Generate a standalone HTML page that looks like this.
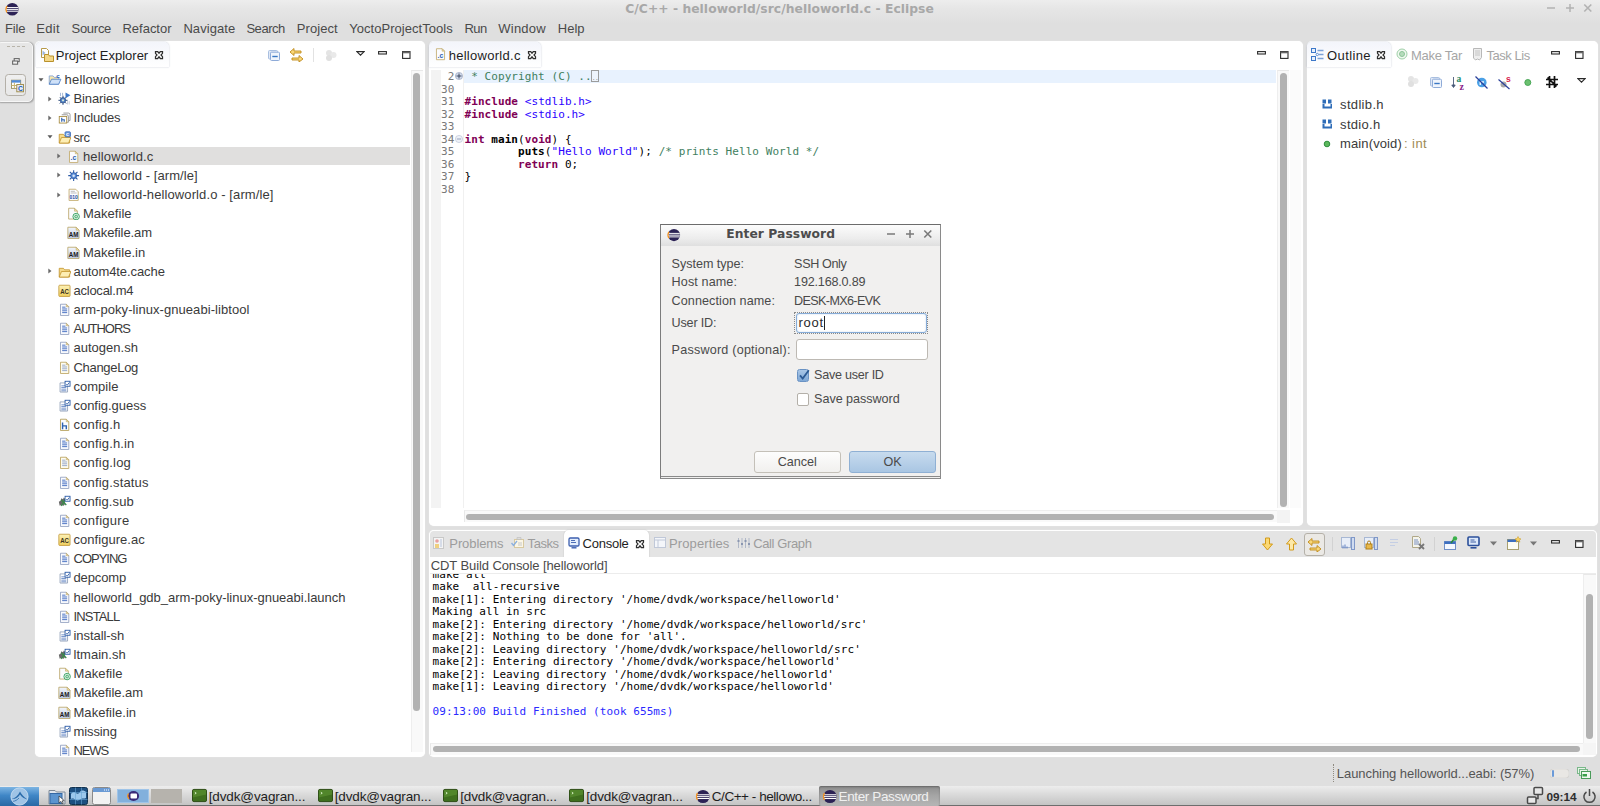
<!DOCTYPE html>
<html><head><meta charset="utf-8"><title>C/C++ - helloworld/src/helloworld.c - Eclipse</title>
<style>
*{box-sizing:border-box}
html,body{margin:0;padding:0}
body{width:1600px;height:806px;overflow:hidden;position:relative;background:#dfdfdf;font-family:"Liberation Sans","DejaVu Sans",sans-serif;font-size:13px;color:#3c3c3c}
.abs,.ic,.t,.m{position:absolute}
.t{white-space:nowrap;line-height:16px;height:16px;margin-top:1px;}
.m{white-space:pre;font-family:"DejaVu Sans Mono","Liberation Mono",monospace;font-size:11px;line-height:12.5px;color:#000;letter-spacing:.07px;margin-top:1px;margin-left:.5px}
.panel{position:absolute;background:#fff;border-radius:5px;box-shadow:0 0 1px rgba(255,255,255,.9)}
.tabsel{position:absolute;border-radius:5px 5px 0 0;background:linear-gradient(#f3f5fb,#fff);box-shadow:0 0 1.500px rgba(80,90,130,.45)}
.kw{color:#7f0055;font-weight:bold}
.str{color:#2a00ff}
.cm{color:#3f7f5f}
.ln{color:#787878}
.b{font-weight:bold}
</style></head><body>

<div class="abs" style="left:0;top:0;width:1600px;height:24px;background:linear-gradient(#ededed,#e6e6e6 35%,#dfdfdf)"></div>
<svg class="ic" style="left:5px;top:2.2px;" width="14.5" height="14.5" viewBox="0 0 16 16"><circle cx="8" cy="8" r="7" fill="#2c2255"/><path d="M2.2 4.5A7 7 0 0 0 2.2 11.5" stroke="#f7941e" stroke-width="1.6" fill="none"/><rect x="2.2" y="5.6" width="12.4" height="1.1" fill="#fff"/><rect x="1.6" y="7.6" width="13.2" height="1.1" fill="#fff"/><rect x="2.2" y="9.6" width="12.4" height="1.1" fill="#fff"/></svg>
<div class="t b" style="left:625.20px;top:-0.5px;font-size:12.3px;color:#a8a8a8;letter-spacing:0.051px;font-family:'DejaVu Sans','Liberation Sans',sans-serif;">C/C++ - helloworld/src/helloworld.c - Eclipse</div>
<svg class="ic" style="left:1547.2px;top:3.3000000000000007px" width="46" height="10" viewBox="0 0 46 10"><path d="M0 5h8M19 5h8M23 1v8" stroke="#b2b2b2" stroke-width="1.500" fill="none"/><path d="M37.300 1.500l7 7M44.300 1.500l-7 7" stroke="#b2b2b2" stroke-width="1.600" fill="none"/></svg>
<div class="t" style="left:4.90px;top:19.5px;font-size:13px;color:#4a4a4a;letter-spacing:-0.151px;">File</div>
<div class="t" style="left:36.20px;top:19.5px;font-size:13px;color:#4a4a4a;letter-spacing:0.373px;">Edit</div>
<div class="t" style="left:71.50px;top:19.5px;font-size:13px;color:#4a4a4a;letter-spacing:-0.267px;">Source</div>
<div class="t" style="left:122.50px;top:19.5px;font-size:13px;color:#4a4a4a;letter-spacing:-0.018px;">Refactor</div>
<div class="t" style="left:183.40px;top:19.5px;font-size:13px;color:#4a4a4a;letter-spacing:0.067px;">Navigate</div>
<div class="t" style="left:246.40px;top:19.5px;font-size:13px;color:#4a4a4a;letter-spacing:-0.451px;">Search</div>
<div class="t" style="left:296.80px;top:19.5px;font-size:13px;color:#4a4a4a;letter-spacing:0.069px;">Project</div>
<div class="t" style="left:349.30px;top:19.5px;font-size:13px;color:#4a4a4a;letter-spacing:0.032px;">YoctoProjectTools</div>
<div class="t" style="left:464.60px;top:19.5px;font-size:13px;color:#4a4a4a;letter-spacing:-0.653px;">Run</div>
<div class="t" style="left:498.30px;top:19.5px;font-size:13px;color:#4a4a4a;letter-spacing:0.225px;">Window</div>
<div class="t" style="left:557.80px;top:19.5px;font-size:13px;color:#4a4a4a;letter-spacing:-0.013px;">Help</div>
<div class="abs" style="left:-4px;top:41.500px;width:36.500px;height:60px;border:1px solid #f6f6f6;border-radius:5px;background:#e6e6e6;box-shadow:0.500px 0.500px 1.500px rgba(0,0,0,.28)"></div>
<div class="abs" style="left:7px;top:46.200px;width:18px;height:0;border-top:1.500px dashed #b8b4aa"></div>
<svg class="ic" style="left:12px;top:58px" width="8" height="7" viewBox="0 0 8 7"><rect x="2.200" y="0.600" width="5" height="3" fill="#f2f2f2" stroke="#6a6a6a" stroke-width="1.100"/><rect x="0.600" y="3" width="5" height="3.200" fill="#f2f2f2" stroke="#6a6a6a" stroke-width="1.100"/></svg>
<div class="abs" style="left:5.200px;top:74.200px;width:21px;height:21.700px;border:1px solid #b4b0a8;border-radius:3.500px;background:linear-gradient(#efefef,#e8e8e8)"></div>
<svg class="ic" style="left:10.500px;top:78.500px" width="13.500" height="14" viewBox="0 0 14 14"><rect x="0.500" y="1" width="9.500" height="8.500" fill="#fff" stroke="#9c946a"/><rect x="0.500" y="1" width="9.500" height="2.500" fill="#4f8bdc"/><path d="M3.500 3.500v6M0.500 6.500h9.500" stroke="#c4b06a"/><rect x="6" y="5.500" width="7" height="7.500" fill="#e4eefc" stroke="#a08c4a"/><text x="7.200" y="12" font-family="Liberation Sans,sans-serif" font-size="7" font-weight="bold" fill="#1c57b0">C</text></svg>
<div class="panel" style="left:35.200px;top:41px;width:389.600px;height:716px"></div>
<div class="tabsel" style="left:36px;top:42px;width:133px;height:25px"></div>
<svg class="ic" style="left:39px;top:46.5px;" width="16" height="16" viewBox="0 0 16 16"><path d="M2.500 1.500h5l2 2v7h-7z" fill="#fff" stroke="#b79a4a"/><path d="M3.500 3.500l3 2.500-3 2.500z" fill="#9bb5e0"/><path d="M5.500 7.500h4l1 1.500h4v5.500h-9z" fill="#f3d789" stroke="#b8912b"/></svg>
<div class="t" style="left:55.80px;top:46.5px;font-size:13px;color:#1e1e1e;letter-spacing:-0.005px;">Project Explorer</div>
<svg class="ic" style="left:153.5px;top:49.6px" width="10" height="10" viewBox="0 0 10 10"><path d="M1.500 1.500h2.200L5 3.200 6.300 1.500h2.200v1.800L7 5l1.500 1.700v1.800H6.300L5 6.800 3.700 8.500H1.500V6.700L3 5 1.500 3.300z" fill="#fff" stroke="#2e2e2e" stroke-width="1.250"/></svg>
<svg class="ic" style="left:268px;top:50px" width="12" height="11" viewBox="0 0 12 11"><rect x="0.500" y="0.500" width="9" height="8.500" rx="1" fill="#dfe8f6" stroke="#a9bfe0"/><rect x="2.500" y="2.200" width="9" height="8.300" rx="1" fill="#f0f5fc" stroke="#8eabd8"/><path d="M4.300 6.500h5.400" stroke="#3a78c4" stroke-width="1.400"/></svg>
<svg class="ic" style="left:289px;top:47px" width="15" height="15" viewBox="0 0 15 15"><path d="M12 4H5V1.500L1 5l4 3.500V6h7z" fill="#f8d77a" stroke="#c08a1a" stroke-width=".9"/><path d="M3 11h7V8.500L14 12l-4 3V13H3z" fill="#f8d77a" stroke="#c08a1a" stroke-width=".9"/></svg>
<div class="abs" style="left:313px;top:48px;width:1px;height:14px;background:#e2e2e2"></div>
<svg class="ic" style="left:324px;top:49px" width="14" height="13" viewBox="0 0 14 13"><circle cx="5" cy="4" r="3" fill="#e4e4e4"/><circle cx="9.500" cy="6" r="3" fill="#e9e9e9"/><circle cx="5" cy="9" r="3" fill="#e0e0e0"/></svg>
<svg class="ic" style="left:355.5px;top:50.5px" width="9" height="5" viewBox="0 0 9 5"><path d="M0.800 0.600h7.400L4.500 4.200z" fill="#fff" stroke="#2a2a2a" stroke-width="1.100"/></svg>
<svg class="ic" style="left:378px;top:51px" width="9" height="4" viewBox="0 0 9 4"><rect x="0.600" y="0.600" width="7.800" height="2.400" fill="#fff" stroke="#2a2a2a" stroke-width="1.100"/></svg>
<svg class="ic" style="left:401.8px;top:51px" width="9" height="8" viewBox="0 0 9 8"><rect x="0.600" y="0.600" width="7.400" height="6.800" fill="#fff" stroke="#2a2a2a" stroke-width="1.100"/><rect x="0.600" y="0.600" width="7.400" height="1.700" fill="#666"/></svg>
<div class="abs" style="left:410.500px;top:70px;width:12px;height:682px;background:#f9f9f9;border-left:1px solid #eeeeee;border-top:1px solid #e8e8e8"></div>
<div class="abs" style="left:413px;top:73px;width:7px;height:638px;border-radius:4px;background:#b2b2b2"></div>
<div class="abs" style="left:38px;top:147px;width:372px;height:18px;background:#e0dfde"></div>
<div class="abs" style="left:37px;top:68px;width:374px;height:688px;overflow:hidden">
<svg class="ic" style="left:0.5px;top:9.5px" width="6" height="4" viewBox="0 0 6 4"><path d="M0.500 0.300h5L3 3.500z" fill="#5a5a5a"/></svg>
<svg class="ic" style="left:11.4px;top:5.00px" width="13.3" height="13.3" viewBox="0 0 16 16"><path d="M1.500 3.500h4.500l1.500 1.800h5.500v8.200h-11.500z" fill="#f7e7ae" stroke="#7f9fd4"/><path d="M1.500 13.500l2.700-6h11.300l-2.700 6z" fill="#cfe1f8" stroke="#4f80c8"/><text x="9.800" y="6.300" font-family="Liberation Sans,sans-serif" font-size="7.500" font-weight="bold" fill="#2458b0">c</text></svg>
<div class="t" style="left:27.5px;top:3.00px;color:#3a3a3a;letter-spacing:0.215px">helloworld</div>
<svg class="ic" style="left:10.5px;top:27.67px" width="4" height="6" viewBox="0 0 4 6"><path d="M0.300 0.500v5L3.500 3z" fill="#6a6a6a"/></svg>
<svg class="ic" style="left:20.9px;top:24.17px" width="13.3" height="13.3" viewBox="0 0 16 16"><g stroke="#33507e" stroke-width="1.200"><path d="M6 4.500v11M0.500 10h11M2.200 6.200l7.600 7.600M9.800 6.200l-7.600 7.600"/></g><circle cx="6" cy="10" r="3.300" fill="#4f7fc4" stroke="#2b4a80" stroke-width=".8"/><circle cx="6" cy="10" r="1.300" fill="#d8ecd8"/><path d="M9 0.500l6 3.500-6 3.500z" fill="#3d78c9"/><path d="M3 1v4M5.500 1v3.500" stroke="#8aa4cc" stroke-width=".9"/><path d="M11.500 11v4M13.500 11v4" stroke="#b0b8c8" stroke-width=".8"/></svg>
<div class="t" style="left:36.5px;top:22.17px;color:#3a3a3a;letter-spacing:-0.134px">Binaries</div>
<svg class="ic" style="left:10.5px;top:46.84px" width="4" height="6" viewBox="0 0 4 6"><path d="M0.300 0.500v5L3.500 3z" fill="#6a6a6a"/></svg>
<svg class="ic" style="left:20.9px;top:43.34px" width="13.3" height="13.3" viewBox="0 0 16 16"><path d="M6.500 2.500h6q2 0 2 2v7h-2" fill="#fff" stroke="#888"/><path d="M4.500 4.500h6q2 0 2 2v7h-2" fill="#fff" stroke="#888"/><rect x="1.500" y="6.500" width="9" height="8" fill="#fff" stroke="#a4873a"/><path d="M4.500 8v5M4.500 10.500h3v2.500" stroke="#2e62b0" stroke-width="1.400" fill="none"/></svg>
<div class="t" style="left:36.5px;top:41.34px;color:#3a3a3a;letter-spacing:-0.203px">Includes</div>
<svg class="ic" style="left:9.5px;top:67.00999999999999px" width="6" height="4" viewBox="0 0 6 4"><path d="M0.500 0.300h5L3 3.500z" fill="#5a5a5a"/></svg>
<svg class="ic" style="left:20.9px;top:62.51px" width="13.3" height="13.3" viewBox="0 0 16 16"><path d="M1.500 4h5l1.500 1.800h6v8.700h-12.500z" fill="#f6dc8c" stroke="#c2952e"/><path d="M1.500 14.500l2.700-6.700h11.300l-2.700 6.700z" fill="#fdeeb4" stroke="#c2952e"/><rect x="8.500" y="1" width="6.500" height="6" rx="1" fill="#6f9fe4" stroke="#3a68b4"/><text x="9.700" y="6" font-family="Liberation Sans,sans-serif" font-size="6" font-weight="bold" fill="#fff">c</text></svg>
<div class="t" style="left:36.5px;top:60.51px;color:#3a3a3a;letter-spacing:-0.381px">src</div>
<svg class="ic" style="left:19.5px;top:85.18px" width="4" height="6" viewBox="0 0 4 6"><path d="M0.300 0.500v5L3.500 3z" fill="#6a6a6a"/></svg>
<svg class="ic" style="left:29.9px;top:81.68px" width="13.3" height="13.3" viewBox="0 0 16 16"><path d="M3 1.500h7l3 3v10.500h-10z" fill="#fbfcff" stroke="#c0a868"/><path d="M10 1.500v3h3z" fill="#f4e2a6" stroke="#b9a468" stroke-width=".7"/><text x="4.300" y="12.500" font-family="Liberation Sans,sans-serif" font-size="8.500" font-weight="bold" fill="#2e62b0">.c</text></svg>
<div class="t" style="left:45.9px;top:79.68px;color:#3a3a3a;letter-spacing:0.162px">helloworld.c</div>
<svg class="ic" style="left:19.5px;top:104.35000000000002px" width="4" height="6" viewBox="0 0 4 6"><path d="M0.300 0.500v5L3.500 3z" fill="#6a6a6a"/></svg>
<svg class="ic" style="left:29.9px;top:100.85px" width="13.3" height="13.3" viewBox="0 0 16 16"><g stroke="#2b5aa5" stroke-width="1.300"><path d="M8 1.500v13M1.500 8h13M3.400 3.400l9.200 9.200M12.600 3.400l-9.200 9.200"/></g><circle cx="8" cy="8" r="3.600" fill="#5b8dd6" stroke="#2b5aa5"/><circle cx="8" cy="8" r="1.500" fill="#dbe8fa"/></svg>
<div class="t" style="left:45.9px;top:98.85px;color:#3a3a3a;letter-spacing:0.065px">helloworld - [arm/le]</div>
<svg class="ic" style="left:19.5px;top:123.52000000000001px" width="4" height="6" viewBox="0 0 4 6"><path d="M0.300 0.500v5L3.500 3z" fill="#6a6a6a"/></svg>
<svg class="ic" style="left:29.9px;top:120.02px" width="13.3" height="13.3" viewBox="0 0 16 16"><path d="M2.500 1.500h8l3 3v10.500h-11z" fill="#fbfcff" stroke="#c0a868"/><path d="M4.500 4h5M4.500 6h7" stroke="#b0b0b0"/><text x="3" y="13.500" font-family="Liberation Sans,sans-serif" font-size="7" font-weight="bold" fill="#1c4aa0" textLength="10" lengthAdjust="spacingAndGlyphs">010</text></svg>
<div class="t" style="left:45.9px;top:118.02px;color:#3a3a3a;letter-spacing:0.102px">helloworld-helloworld.o - [arm/le]</div>
<svg class="ic" style="left:29.9px;top:139.19px" width="13.3" height="13.3" viewBox="0 0 16 16"><path d="M2 1.500h7l3.500 3.500v9.500h-10.500z" fill="#fbfbfd" stroke="#b9a468"/><path d="M9 1.500v3.500h3.500z" fill="#f4e2a6" stroke="#b9a468" stroke-width=".7"/><circle cx="11" cy="11.500" r="3.900" fill="#e6f6ea" stroke="#35a060" stroke-width="1.100"/><circle cx="11" cy="11.500" r="1.700" fill="#bfe6cc" stroke="#35a060" stroke-width="1"/></svg>
<div class="t" style="left:45.9px;top:137.19px;color:#3a3a3a;letter-spacing:0.035px">Makefile</div>
<svg class="ic" style="left:29.9px;top:158.36px" width="13.3" height="13.3" viewBox="0 0 16 16"><defs><linearGradient id="gam" x1="0" y1="0" x2="0" y2="1"><stop offset="0" stop-color="#f4f6fb"/><stop offset="1" stop-color="#bccae4"/></linearGradient></defs><path d="M1 1.500h10l3.500 3.500v10h-13.500z" fill="url(#gam)" stroke="#b9a468"/><path d="M11 1.500v3.500h3.500z" fill="#f4e2a6" stroke="#b9a468" stroke-width=".7"/><text x="2.200" y="13.600" font-family="Liberation Sans,sans-serif" font-size="9" font-weight="bold" fill="#1a1a1a" textLength="11.500" lengthAdjust="spacingAndGlyphs">AM</text></svg>
<div class="t" style="left:45.9px;top:156.36px;color:#3a3a3a;letter-spacing:-0.098px">Makefile.am</div>
<svg class="ic" style="left:29.9px;top:177.53px" width="13.3" height="13.3" viewBox="0 0 16 16"><defs><linearGradient id="gam" x1="0" y1="0" x2="0" y2="1"><stop offset="0" stop-color="#f4f6fb"/><stop offset="1" stop-color="#bccae4"/></linearGradient></defs><path d="M1 1.500h10l3.500 3.500v10h-13.500z" fill="url(#gam)" stroke="#b9a468"/><path d="M11 1.500v3.500h3.500z" fill="#f4e2a6" stroke="#b9a468" stroke-width=".7"/><text x="2.200" y="13.600" font-family="Liberation Sans,sans-serif" font-size="9" font-weight="bold" fill="#1a1a1a" textLength="11.500" lengthAdjust="spacingAndGlyphs">AM</text></svg>
<div class="t" style="left:45.9px;top:175.53px;color:#3a3a3a;letter-spacing:0.014px">Makefile.in</div>
<svg class="ic" style="left:10.5px;top:200.20000000000005px" width="4" height="6" viewBox="0 0 4 6"><path d="M0.300 0.500v5L3.500 3z" fill="#6a6a6a"/></svg>
<svg class="ic" style="left:20.9px;top:196.70px" width="13.3" height="13.3" viewBox="0 0 16 16"><path d="M1.500 4h5l1.500 1.800h6v8.700h-12.500z" fill="#f6dc8c" stroke="#c2952e"/><path d="M1.500 14.500l2.700-6.700h11.300l-2.700 6.700z" fill="#fdeeb4" stroke="#c2952e"/></svg>
<div class="t" style="left:36.5px;top:194.70px;color:#3a3a3a;letter-spacing:-0.087px">autom4te.cache</div>
<svg class="ic" style="left:20.9px;top:215.87px" width="13.3" height="13.3" viewBox="0 0 16 16"><defs><linearGradient id="gac" x1="0" y1="0" x2="0" y2="1"><stop offset="0" stop-color="#fdf2b8"/><stop offset="1" stop-color="#efcf5e"/></linearGradient></defs><rect x="1" y="1.500" width="13.500" height="13.500" rx="1" fill="url(#gac)" stroke="#c29a3c"/><text x="2.600" y="12.600" font-family="Liberation Sans,sans-serif" font-size="9.500" font-weight="bold" fill="#3a3320" textLength="10.500" lengthAdjust="spacingAndGlyphs">AC</text></svg>
<div class="t" style="left:36.5px;top:213.87px;color:#3a3a3a;letter-spacing:-0.244px">aclocal.m4</div>
<svg class="ic" style="left:20.9px;top:235.04px" width="13.3" height="13.3" viewBox="0 0 16 16"><path d="M3 1.500h7l3 3v10.500h-10z" fill="#fafbfe" stroke="#8d9cbc"/><path d="M10 1.500v3h3z" fill="#efd9a0" stroke="#b9a468" stroke-width=".7"/><path d="M5 5h4M5 7.200h6M5 9.400h6M5 11.600h6" stroke="#4c74c4" stroke-width="1.200"/></svg>
<div class="t" style="left:36.5px;top:233.04px;color:#3a3a3a;letter-spacing:0.059px">arm-poky-linux-gnueabi-libtool</div>
<svg class="ic" style="left:20.9px;top:254.21px" width="13.3" height="13.3" viewBox="0 0 16 16"><path d="M3 1.500h7l3 3v10.500h-10z" fill="#fafbfe" stroke="#8d9cbc"/><path d="M10 1.500v3h3z" fill="#efd9a0" stroke="#b9a468" stroke-width=".7"/><path d="M5 5h4M5 7.200h6M5 9.400h6M5 11.600h6" stroke="#4c74c4" stroke-width="1.200"/></svg>
<div class="t" style="left:36.5px;top:252.21px;color:#3a3a3a;letter-spacing:-1.009px">AUTHORS</div>
<svg class="ic" style="left:20.9px;top:273.38px" width="13.3" height="13.3" viewBox="0 0 16 16"><path d="M3 1.500h7l3 3v10.500h-10z" fill="#fafbfe" stroke="#8d9cbc"/><path d="M10 1.500v3h3z" fill="#efd9a0" stroke="#b9a468" stroke-width=".7"/><path d="M5 5h4M5 7.200h6M5 9.400h6M5 11.600h6" stroke="#4c74c4" stroke-width="1.200"/></svg>
<div class="t" style="left:36.5px;top:271.38px;color:#3a3a3a;letter-spacing:0.016px">autogen.sh</div>
<svg class="ic" style="left:20.9px;top:292.55px" width="13.3" height="13.3" viewBox="0 0 16 16"><path d="M3 1.500h7l3 3v10.500h-10z" fill="#fffdf0" stroke="#b9a05a"/><path d="M10 1.500v3h3z" fill="#efd9a0" stroke="#b9a468" stroke-width=".7"/><path d="M5 5h4M5 7.200h6M5 9.400h6M5 11.600h6" stroke="#8fa2c8" stroke-width="1.100"/></svg>
<div class="t" style="left:36.5px;top:290.55px;color:#3a3a3a;letter-spacing:-0.304px">ChangeLog</div>
<svg class="ic" style="left:20.9px;top:311.72px" width="13.3" height="13.3" viewBox="0 0 16 16"><path d="M2.5 3.5h7l2 2v9h-9z" fill="#fff" stroke="#8c9bb5"/><path d="M4 7h5M4 9h6M4 11h6M4 13h6" stroke="#5b7fc0" stroke-width="1"/><rect x="8.5" y="1.5" width="6" height="6" fill="#fff" stroke="#1c4fa0"/><path d="M10 5l1.2 1.2L13.6 3" stroke="#1c4fa0" fill="none"/></svg>
<div class="t" style="left:36.5px;top:309.72px;color:#3a3a3a;letter-spacing:0.015px">compile</div>
<svg class="ic" style="left:20.9px;top:330.89px" width="13.3" height="13.3" viewBox="0 0 16 16"><path d="M2.5 3.5h7l2 2v9h-9z" fill="#fff" stroke="#8c9bb5"/><path d="M4 7h5M4 9h6M4 11h6M4 13h6" stroke="#5b7fc0" stroke-width="1"/><rect x="8.5" y="1.5" width="6" height="6" fill="#fff" stroke="#1c4fa0"/><path d="M10 5l1.2 1.2L13.6 3" stroke="#1c4fa0" fill="none"/></svg>
<div class="t" style="left:36.5px;top:328.89px;color:#3a3a3a;letter-spacing:-0.033px">config.guess</div>
<svg class="ic" style="left:20.9px;top:350.06px" width="13.3" height="13.3" viewBox="0 0 16 16"><path d="M3 1.500h7l3 3v10.500h-10z" fill="#fbfcff" stroke="#b09a50"/><path d="M10 1.500v3h3z" fill="#f4e2a6" stroke="#b9a468" stroke-width=".7"/><path d="M5.500 5.500v8M5.500 9.500h4.500v4" stroke="#2e62b0" stroke-width="1.700" fill="none"/></svg>
<div class="t" style="left:36.5px;top:348.06px;color:#3a3a3a;letter-spacing:0.157px">config.h</div>
<svg class="ic" style="left:20.9px;top:369.23px" width="13.3" height="13.3" viewBox="0 0 16 16"><path d="M3 1.500h7l3 3v10.500h-10z" fill="#fafbfe" stroke="#8d9cbc"/><path d="M10 1.500v3h3z" fill="#efd9a0" stroke="#b9a468" stroke-width=".7"/><path d="M5 5h4M5 7.200h6M5 9.400h6M5 11.600h6" stroke="#4c74c4" stroke-width="1.200"/></svg>
<div class="t" style="left:36.5px;top:367.23px;color:#3a3a3a;letter-spacing:0.158px">config.h.in</div>
<svg class="ic" style="left:20.9px;top:388.40px" width="13.3" height="13.3" viewBox="0 0 16 16"><path d="M3 1.500h7l3 3v10.500h-10z" fill="#fffdf0" stroke="#b9a05a"/><path d="M10 1.500v3h3z" fill="#efd9a0" stroke="#b9a468" stroke-width=".7"/><path d="M5 5h4M5 7.200h6M5 9.400h6M5 11.600h6" stroke="#8fa2c8" stroke-width="1.100"/></svg>
<div class="t" style="left:36.5px;top:386.40px;color:#3a3a3a;letter-spacing:0.184px">config.log</div>
<svg class="ic" style="left:20.9px;top:407.57px" width="13.3" height="13.3" viewBox="0 0 16 16"><path d="M3 1.500h7l3 3v10.500h-10z" fill="#fafbfe" stroke="#8d9cbc"/><path d="M10 1.500v3h3z" fill="#efd9a0" stroke="#b9a468" stroke-width=".7"/><path d="M5 5h4M5 7.200h6M5 9.400h6M5 11.600h6" stroke="#4c74c4" stroke-width="1.200"/></svg>
<div class="t" style="left:36.5px;top:405.57px;color:#3a3a3a;letter-spacing:0.169px">config.status</div>
<svg class="ic" style="left:20.9px;top:426.74px" width="13.3" height="13.3" viewBox="0 0 16 16"><path d="M1 8l2-1 1-3 2 1 1-2 2 2-1 3 1 2-2 3-3-1-2 1z" fill="#6a6a6a"/><path d="M4 6l6 6M9 5l-5 8" stroke="#3a8a4a" stroke-width="1.5"/><rect x="8.5" y="1.5" width="6" height="6" fill="#fff" stroke="#1c4fa0"/><path d="M10 5l1.2 1.2L13.6 3" stroke="#1c4fa0" fill="none"/></svg>
<div class="t" style="left:36.5px;top:424.74px;color:#3a3a3a;letter-spacing:0.113px">config.sub</div>
<svg class="ic" style="left:20.9px;top:445.91px" width="13.3" height="13.3" viewBox="0 0 16 16"><path d="M3 1.500h7l3 3v10.500h-10z" fill="#fafbfe" stroke="#8d9cbc"/><path d="M10 1.500v3h3z" fill="#efd9a0" stroke="#b9a468" stroke-width=".7"/><path d="M5 5h4M5 7.200h6M5 9.400h6M5 11.600h6" stroke="#4c74c4" stroke-width="1.200"/></svg>
<div class="t" style="left:36.5px;top:443.91px;color:#3a3a3a;letter-spacing:0.268px">configure</div>
<svg class="ic" style="left:20.9px;top:465.08px" width="13.3" height="13.3" viewBox="0 0 16 16"><defs><linearGradient id="gac" x1="0" y1="0" x2="0" y2="1"><stop offset="0" stop-color="#fdf2b8"/><stop offset="1" stop-color="#efcf5e"/></linearGradient></defs><rect x="1" y="1.500" width="13.500" height="13.500" rx="1" fill="url(#gac)" stroke="#c29a3c"/><text x="2.600" y="12.600" font-family="Liberation Sans,sans-serif" font-size="9.500" font-weight="bold" fill="#3a3320" textLength="10.500" lengthAdjust="spacingAndGlyphs">AC</text></svg>
<div class="t" style="left:36.5px;top:463.08px;color:#3a3a3a;letter-spacing:0.039px">configure.ac</div>
<svg class="ic" style="left:20.9px;top:484.25px" width="13.3" height="13.3" viewBox="0 0 16 16"><path d="M3 1.500h7l3 3v10.500h-10z" fill="#fafbfe" stroke="#8d9cbc"/><path d="M10 1.500v3h3z" fill="#efd9a0" stroke="#b9a468" stroke-width=".7"/><path d="M5 5h4M5 7.200h6M5 9.400h6M5 11.600h6" stroke="#4c74c4" stroke-width="1.200"/></svg>
<div class="t" style="left:36.5px;top:482.25px;color:#3a3a3a;letter-spacing:-0.996px">COPYING</div>
<svg class="ic" style="left:20.9px;top:503.42px" width="13.3" height="13.3" viewBox="0 0 16 16"><path d="M2.5 3.5h7l2 2v9h-9z" fill="#fff" stroke="#8c9bb5"/><path d="M4 7h5M4 9h6M4 11h6M4 13h6" stroke="#5b7fc0" stroke-width="1"/><rect x="8.5" y="1.5" width="6" height="6" fill="#fff" stroke="#1c4fa0"/><path d="M10 5l1.2 1.2L13.6 3" stroke="#1c4fa0" fill="none"/></svg>
<div class="t" style="left:36.5px;top:501.42px;color:#3a3a3a;letter-spacing:-0.126px">depcomp</div>
<svg class="ic" style="left:20.9px;top:522.59px" width="13.3" height="13.3" viewBox="0 0 16 16"><path d="M3 1.500h7l3 3v10.500h-10z" fill="#fafbfe" stroke="#8d9cbc"/><path d="M10 1.500v3h3z" fill="#efd9a0" stroke="#b9a468" stroke-width=".7"/><path d="M5 5h4M5 7.200h6M5 9.400h6M5 11.600h6" stroke="#4c74c4" stroke-width="1.200"/></svg>
<div class="t" style="left:36.5px;top:520.59px;color:#3a3a3a;letter-spacing:-0.010px">helloworld_gdb_arm-poky-linux-gnueabi.launch</div>
<svg class="ic" style="left:20.9px;top:541.76px" width="13.3" height="13.3" viewBox="0 0 16 16"><path d="M3 1.500h7l3 3v10.500h-10z" fill="#fafbfe" stroke="#8d9cbc"/><path d="M10 1.500v3h3z" fill="#efd9a0" stroke="#b9a468" stroke-width=".7"/><path d="M5 5h4M5 7.200h6M5 9.400h6M5 11.600h6" stroke="#4c74c4" stroke-width="1.200"/></svg>
<div class="t" style="left:36.5px;top:539.76px;color:#3a3a3a;letter-spacing:-0.840px">INSTALL</div>
<svg class="ic" style="left:20.9px;top:560.93px" width="13.3" height="13.3" viewBox="0 0 16 16"><path d="M2.5 3.5h7l2 2v9h-9z" fill="#fff" stroke="#8c9bb5"/><path d="M4 7h5M4 9h6M4 11h6M4 13h6" stroke="#5b7fc0" stroke-width="1"/><rect x="8.5" y="1.5" width="6" height="6" fill="#fff" stroke="#1c4fa0"/><path d="M10 5l1.2 1.2L13.6 3" stroke="#1c4fa0" fill="none"/></svg>
<div class="t" style="left:36.5px;top:558.93px;color:#3a3a3a;letter-spacing:-0.060px">install-sh</div>
<svg class="ic" style="left:20.9px;top:580.10px" width="13.3" height="13.3" viewBox="0 0 16 16"><path d="M1 8l2-1 1-3 2 1 1-2 2 2-1 3 1 2-2 3-3-1-2 1z" fill="#6a6a6a"/><path d="M4 6l6 6M9 5l-5 8" stroke="#3a8a4a" stroke-width="1.5"/><rect x="8.5" y="1.5" width="6" height="6" fill="#fff" stroke="#1c4fa0"/><path d="M10 5l1.2 1.2L13.6 3" stroke="#1c4fa0" fill="none"/></svg>
<div class="t" style="left:36.5px;top:578.10px;color:#3a3a3a;letter-spacing:0.030px">ltmain.sh</div>
<svg class="ic" style="left:20.9px;top:599.27px" width="13.3" height="13.3" viewBox="0 0 16 16"><path d="M2 1.500h7l3.500 3.500v9.500h-10.500z" fill="#fbfbfd" stroke="#b9a468"/><path d="M9 1.500v3.500h3.500z" fill="#f4e2a6" stroke="#b9a468" stroke-width=".7"/><circle cx="11" cy="11.500" r="3.900" fill="#e6f6ea" stroke="#35a060" stroke-width="1.100"/><circle cx="11" cy="11.500" r="1.700" fill="#bfe6cc" stroke="#35a060" stroke-width="1"/></svg>
<div class="t" style="left:36.5px;top:597.27px;color:#3a3a3a;letter-spacing:0.085px">Makefile</div>
<svg class="ic" style="left:20.9px;top:618.44px" width="13.3" height="13.3" viewBox="0 0 16 16"><defs><linearGradient id="gam" x1="0" y1="0" x2="0" y2="1"><stop offset="0" stop-color="#f4f6fb"/><stop offset="1" stop-color="#bccae4"/></linearGradient></defs><path d="M1 1.500h10l3.500 3.500v10h-13.500z" fill="url(#gam)" stroke="#b9a468"/><path d="M11 1.500v3.500h3.500z" fill="#f4e2a6" stroke="#b9a468" stroke-width=".7"/><text x="2.200" y="13.600" font-family="Liberation Sans,sans-serif" font-size="9" font-weight="bold" fill="#1a1a1a" textLength="11.500" lengthAdjust="spacingAndGlyphs">AM</text></svg>
<div class="t" style="left:36.5px;top:616.44px;color:#3a3a3a;letter-spacing:-0.062px">Makefile.am</div>
<svg class="ic" style="left:20.9px;top:637.61px" width="13.3" height="13.3" viewBox="0 0 16 16"><defs><linearGradient id="gam" x1="0" y1="0" x2="0" y2="1"><stop offset="0" stop-color="#f4f6fb"/><stop offset="1" stop-color="#bccae4"/></linearGradient></defs><path d="M1 1.500h10l3.500 3.500v10h-13.500z" fill="url(#gam)" stroke="#b9a468"/><path d="M11 1.500v3.500h3.500z" fill="#f4e2a6" stroke="#b9a468" stroke-width=".7"/><text x="2.200" y="13.600" font-family="Liberation Sans,sans-serif" font-size="9" font-weight="bold" fill="#1a1a1a" textLength="11.500" lengthAdjust="spacingAndGlyphs">AM</text></svg>
<div class="t" style="left:36.5px;top:635.61px;color:#3a3a3a;letter-spacing:0.042px">Makefile.in</div>
<svg class="ic" style="left:20.9px;top:656.78px" width="13.3" height="13.3" viewBox="0 0 16 16"><path d="M2.5 3.5h7l2 2v9h-9z" fill="#fff" stroke="#8c9bb5"/><path d="M4 7h5M4 9h6M4 11h6M4 13h6" stroke="#5b7fc0" stroke-width="1"/><rect x="8.5" y="1.5" width="6" height="6" fill="#fff" stroke="#1c4fa0"/><path d="M10 5l1.2 1.2L13.6 3" stroke="#1c4fa0" fill="none"/></svg>
<div class="t" style="left:36.5px;top:654.78px;color:#3a3a3a;letter-spacing:-0.111px">missing</div>
<svg class="ic" style="left:20.9px;top:675.95px" width="13.3" height="13.3" viewBox="0 0 16 16"><path d="M3 1.500h7l3 3v10.500h-10z" fill="#fafbfe" stroke="#8d9cbc"/><path d="M10 1.500v3h3z" fill="#efd9a0" stroke="#b9a468" stroke-width=".7"/><path d="M5 5h4M5 7.200h6M5 9.400h6M5 11.600h6" stroke="#4c74c4" stroke-width="1.200"/></svg>
<div class="t" style="left:36.5px;top:673.95px;color:#3a3a3a;letter-spacing:-1.125px">NEWS</div>
</div>
<div class="panel" style="left:428.500px;top:41px;width:874.500px;height:485px"></div>
<div class="tabsel" style="left:429px;top:42px;width:111.500px;height:25px"></div>
<svg class="ic" style="left:434px;top:47px;" width="13" height="14" viewBox="0 0 16 16"><path d="M3 1.500h7l3 3v10.500h-10z" fill="#fbfcff" stroke="#c0a868"/><path d="M10 1.500v3h3z" fill="#f4e2a6" stroke="#b9a468" stroke-width=".7"/><text x="4.300" y="12.500" font-family="Liberation Sans,sans-serif" font-size="8.500" font-weight="bold" fill="#2e62b0">.c</text></svg>
<div class="t" style="left:448.70px;top:46.5px;font-size:13px;color:#1e1e1e;letter-spacing:0.279px;">helloworld.c</div>
<svg class="ic" style="left:526.5px;top:49.6px" width="10" height="10" viewBox="0 0 10 10"><path d="M1.500 1.500h2.200L5 3.200 6.300 1.500h2.200v1.800L7 5l1.500 1.700v1.800H6.300L5 6.800 3.700 8.500H1.500V6.700L3 5 1.500 3.300z" fill="#fff" stroke="#2e2e2e" stroke-width="1.250"/></svg>
<svg class="ic" style="left:1257px;top:51px" width="9" height="4" viewBox="0 0 9 4"><rect x="0.600" y="0.600" width="7.800" height="2.400" fill="#fff" stroke="#2a2a2a" stroke-width="1.100"/></svg>
<svg class="ic" style="left:1279.8px;top:51px" width="9" height="8" viewBox="0 0 9 8"><rect x="0.600" y="0.600" width="7.400" height="6.800" fill="#fff" stroke="#2a2a2a" stroke-width="1.100"/><rect x="0.600" y="0.600" width="7.400" height="1.700" fill="#666"/></svg>
<div class="abs" style="left:431px;top:70px;width:10px;height:438px;background:#f3f3f3"></div>
<div class="abs" style="left:463px;top:70px;width:1px;height:438px;background:#f0f0f0"></div>
<div class="abs" style="left:464px;top:70px;width:812px;height:12.500px;background:#e8f2fe"></div>
<div class="abs" style="left:1277px;top:70px;width:12px;height:438px;background:#f9f9f9;border-left:1px solid #eeeeee;border-top:1px solid #e8e8e8"></div>
<div class="abs" style="left:1280.200px;top:73px;width:6.700px;height:434px;border-radius:4px;background:#b2b2b2"></div>
<div class="abs" style="left:1290px;top:70px;width:11px;height:438px;background:#fbfbfb"></div>
<div class="abs" style="left:1276.500px;top:509.700px;width:13.300px;height:13px;background:#f3f3f3"></div>
<div class="abs" style="left:464px;top:510px;width:813px;height:12px;background:#f9f9f9;border-top:1px solid #eeeeee;border-left:1px solid #e8e8e8"></div>
<div class="abs" style="left:466px;top:513.700px;width:807.500px;height:6.600px;border-radius:4px;background:#b2b2b2"></div>
<div class="m ln" style="left:430px;width:24px;text-align:right;top:70.0px">2</div>
<div class="m" style="left:464px;top:70.0px"><span class="cm"> * Copyright (C) ..</span></div>
<div class="m ln" style="left:430px;width:24px;text-align:right;top:82.5px">30</div>
<div class="m ln" style="left:430px;width:24px;text-align:right;top:95.0px">31</div>
<div class="m" style="left:464px;top:95.0px"><span class="kw">#include</span> <span class="str">&lt;stdlib.h&gt;</span></div>
<div class="m ln" style="left:430px;width:24px;text-align:right;top:107.5px">32</div>
<div class="m" style="left:464px;top:107.5px"><span class="kw">#include</span> <span class="str">&lt;stdio.h&gt;</span></div>
<div class="m ln" style="left:430px;width:24px;text-align:right;top:120.0px">33</div>
<div class="m ln" style="left:430px;width:24px;text-align:right;top:132.5px">34</div>
<div class="m" style="left:464px;top:132.5px"><span class="kw">int</span> <span class="b">main</span>(<span class="kw">void</span>) {</div>
<div class="m ln" style="left:430px;width:24px;text-align:right;top:145.0px">35</div>
<div class="m" style="left:464px;top:145.0px">        <span class="b">puts</span>(<span class="str">"Hello World"</span>); <span class="cm">/* prints Hello World */</span></div>
<div class="m ln" style="left:430px;width:24px;text-align:right;top:157.5px">36</div>
<div class="m" style="left:464px;top:157.5px">        <span class="kw">return</span> 0;</div>
<div class="m ln" style="left:430px;width:24px;text-align:right;top:170.0px">37</div>
<div class="m" style="left:464px;top:170.0px">}</div>
<div class="m ln" style="left:430px;width:24px;text-align:right;top:182.5px">38</div>
<svg class="ic" style="left:454.500px;top:72px" width="8" height="8" viewBox="0 0 8 8"><circle cx="4" cy="4" r="3.600" fill="#d3dcec" stroke="#8e9cb8" stroke-width=".6"/><path d="M1.500 4h5M4 1.500v5" stroke="#2c3a56" stroke-width=".9"/></svg>
<svg class="ic" style="left:454.500px;top:135px" width="8" height="8" viewBox="0 0 8 8"><circle cx="4" cy="4" r="3.600" fill="#eef1f7" stroke="#b4bed2" stroke-width=".6"/><path d="M1.900 4h4.200" stroke="#8a98b4" stroke-width=".9"/></svg>
<div class="abs" style="left:591.200px;top:70.300px;width:7.600px;height:12.200px;border:1px solid #9c9c9c;background:#eef4fc"></div>
<div class="m" style="left:591.900px;top:74.200px;color:#6a6a6a;font-size:5.500px;letter-spacing:0;line-height:8px;margin:0">..</div>
<div class="panel" style="left:1306.500px;top:41px;width:291.500px;height:485px"></div>
<div class="tabsel" style="left:1307px;top:42px;width:84px;height:25px"></div>
<svg class="ic" style="left:1311px;top:48px" width="13" height="13" viewBox="0 0 13 13"><rect x="0.500" y="0.500" width="4" height="4" fill="#e8f0fb" stroke="#3d78c9"/><rect x="0.500" y="8.500" width="4" height="4" fill="#e8f0fb" stroke="#3d78c9"/><path d="M6.500 2.500h6M8 6.500h4.500M6.500 10.500h6" stroke="#7da2d8" stroke-width="1.400"/><circle cx="6.300" cy="6.500" r="1.200" fill="none" stroke="#3d78c9" stroke-width=".8"/></svg>
<div class="t" style="left:1327.10px;top:46.5px;font-size:13px;color:#1e1e1e;letter-spacing:0.371px;">Outline</div>
<svg class="ic" style="left:1375.5px;top:49.6px" width="10" height="10" viewBox="0 0 10 10"><path d="M1.500 1.500h2.200L5 3.200 6.300 1.500h2.200v1.800L7 5l1.500 1.700v1.800H6.300L5 6.800 3.700 8.500H1.500V6.700L3 5 1.500 3.300z" fill="#fff" stroke="#2e2e2e" stroke-width="1.250"/></svg>
<svg class="ic" style="left:1396px;top:48px" width="12" height="12" viewBox="0 0 12 12"><circle cx="6" cy="6" r="5" fill="#f0f8f0" stroke="#9fd0a8"/><circle cx="6" cy="6" r="2.500" fill="#b5dcbc" stroke="#8cc498"/></svg>
<div class="t" style="left:1411.00px;top:46.5px;font-size:13px;color:#a6a6a6;letter-spacing:-0.279px;">Make Tar</div>
<svg class="ic" style="left:1472px;top:47px" width="11" height="14" viewBox="0 0 11 14"><path d="M1.500 1.500h8v9l-2 2.500-2-1-2 1-2-2z" fill="#eee" stroke="#b8b8b8"/><path d="M3 4h5M3 6h5M3 8h5" stroke="#c4c4c4"/></svg>
<div class="t" style="left:1486.40px;top:46.5px;font-size:13px;color:#a6a6a6;letter-spacing:-0.446px;">Task Lis</div>
<svg class="ic" style="left:1551px;top:51px" width="9" height="4" viewBox="0 0 9 4"><rect x="0.600" y="0.600" width="7.800" height="2.400" fill="#fff" stroke="#2a2a2a" stroke-width="1.100"/></svg>
<svg class="ic" style="left:1574.8px;top:51px" width="9" height="8" viewBox="0 0 9 8"><rect x="0.600" y="0.600" width="7.400" height="6.800" fill="#fff" stroke="#2a2a2a" stroke-width="1.100"/><rect x="0.600" y="0.600" width="7.400" height="1.700" fill="#666"/></svg>
<svg class="ic" style="left:1406px;top:75px" width="14" height="13" viewBox="0 0 14 13"><circle cx="5" cy="4" r="3" fill="#e4e4e4"/><circle cx="9.500" cy="6" r="3" fill="#e9e9e9"/><circle cx="5" cy="9" r="3" fill="#e0e0e0"/></svg>
<svg class="ic" style="left:1430px;top:77px" width="12" height="11" viewBox="0 0 12 11"><rect x="0.500" y="0.500" width="9" height="8.500" rx="1" fill="#dfe8f6" stroke="#a9bfe0"/><rect x="2.500" y="2.200" width="9" height="8.300" rx="1" fill="#f0f5fc" stroke="#8eabd8"/><path d="M4.300 6.500h5.400" stroke="#3a78c4" stroke-width="1.400"/></svg>
<svg class="ic" style="left:1451px;top:75px" width="16" height="16" viewBox="0 0 16 16"><path d="M2.500 2v10M0.800 10l1.700 2.500 1.700-2.500z" stroke="#4a5a78" stroke-width=".9" fill="#4a5a78"/><text x="5.500" y="7" font-family="Liberation Serif,serif" font-size="9.500" font-weight="bold" fill="#1f8a6a">a</text><text x="8.500" y="14.500" font-family="Liberation Serif,serif" font-size="10" font-weight="bold" fill="#8a1f8a">z</text></svg>
<svg class="ic" style="left:1474px;top:75px" width="15" height="15" viewBox="0 0 15 15"><circle cx="7.800" cy="7.500" r="4.800" fill="#4aa0e6"/><path d="M5.500 6.200h4.500v1.600h-3v2.200h-1.500z" fill="#eaf4fd"/><path d="M1.500 1.500l12 12" stroke="#2a3f9a" stroke-width="1.200"/></svg>
<svg class="ic" style="left:1497px;top:75px" width="15" height="15" viewBox="0 0 15 15"><circle cx="6.500" cy="9.500" r="3" fill="#a8a8a8"/><path d="M1.500 4.500l11 9.500" stroke="#2a3f9a" stroke-width="1.200"/><text x="9" y="7" font-family="Liberation Sans,sans-serif" font-size="8.500" font-weight="bold" fill="#d8204a">s</text></svg>
<svg class="ic" style="left:1523px;top:78px" width="9" height="9" viewBox="0 0 9 9"><circle cx="4.800" cy="4.500" r="3" fill="#6cc070" stroke="#3fa24f" stroke-width=".9"/></svg>
<svg class="ic" style="left:1545px;top:75px" width="14" height="14" viewBox="0 0 14 14"><path d="M4.500 1v12M9.500 1v12M1 4.500h12M1 9.500h12M2.500 2.500l9 9" stroke="#111" stroke-width="1.700"/></svg>
<svg class="ic" style="left:1576.8px;top:77.9px" width="9" height="5" viewBox="0 0 9 5"><path d="M0.800 0.600h7.400L4.500 4.200z" fill="#fff" stroke="#2a2a2a" stroke-width="1.100"/></svg>
<svg class="ic" style="left:1322px;top:99px" width="10" height="10" viewBox="0 0 10 10"><rect x="0.500" y="0.500" width="3.500" height="4" fill="#2f6db8"/><rect x="6" y="0.500" width="3.500" height="4" fill="#2f6db8"/><path d="M1.500 5v3.500h8V5" fill="none" stroke="#2f6db8" stroke-width="2"/></svg>
<div class="t" style="left:1340.10px;top:96px;font-size:13px;color:#3a3a3a;letter-spacing:0.325px;">stdlib.h</div>
<svg class="ic" style="left:1322px;top:118.5px" width="10" height="10" viewBox="0 0 10 10"><rect x="0.500" y="0.500" width="3.500" height="4" fill="#2f6db8"/><rect x="6" y="0.500" width="3.500" height="4" fill="#2f6db8"/><path d="M1.500 5v3.500h8V5" fill="none" stroke="#2f6db8" stroke-width="2"/></svg>
<div class="t" style="left:1340.10px;top:115.5px;font-size:13px;color:#3a3a3a;letter-spacing:0.312px;">stdio.h</div>
<svg class="ic" style="left:1323px;top:139.500px" width="8" height="8" viewBox="0 0 8 8"><circle cx="4" cy="4" r="2.800" fill="#5cb85c" stroke="#2f8f3f"/></svg>
<div class="t" style="left:1340.10px;top:135px;font-size:13px;color:#3a3a3a;letter-spacing:0.111px;">main(void)</div>
<div class="t" style="left:1404.00px;top:135px;font-size:13px;color:#a08a54;letter-spacing:0.426px;">: int</div>
<div class="panel" style="left:428.500px;top:529.500px;width:1168px;height:227.500px;background:#fff;overflow:hidden"><div style="margin:1px 1px 0 1px;height:26.500px;background:#e4e4e4;border-radius:4px 4px 0 0"></div></div>
<div class="abs" style="left:564px;top:530px;width:85px;height:27.500px;background:#fff;border-radius:5px 5px 0 0;box-shadow:0 0 1.500px rgba(0,0,0,.2)"></div>
<div class="abs" style="left:562px;top:557px;width:90px;height:3px;background:#fff"></div>
<svg class="ic" style="left:433px;top:537px" width="12" height="13" viewBox="0 0 12 13"><rect x="0.500" y="0.500" width="10" height="11" fill="#f4f4f4" stroke="#c8c8c8"/><circle cx="4" cy="4" r="1.800" fill="#e8a0a0"/><rect x="2" y="7" width="4" height="4" fill="#f0d080"/><path d="M8 2v8" stroke="#b8c4dc"/></svg>
<div class="t" style="left:449.30px;top:535.3px;font-size:13px;color:#9c9c9c;letter-spacing:-0.090px;">Problems</div>
<svg class="ic" style="left:511px;top:537px" width="13" height="12" viewBox="0 0 13 12"><rect x="3.500" y="2.500" width="9" height="8" fill="#fbf6e6" stroke="#d8c9a0"/><path d="M6 0.500h4v2H6z" fill="#ddd" stroke="#bbb" stroke-width=".6"/><path d="M0.500 6l2 2.500L6 4" stroke="#8ab0e0" stroke-width="1.300" fill="none"/><path d="M7 6h4M7 8h4" stroke="#c8c8c8"/></svg>
<div class="t" style="left:527.60px;top:535.3px;font-size:13px;color:#9c9c9c;letter-spacing:-0.427px;">Tasks</div>
<svg class="ic" style="left:568px;top:537px" width="12" height="12" viewBox="0 0 12 12"><rect x="1" y="1" width="10" height="8" rx="1.200" fill="#e4eefc" stroke="#3c5fae" stroke-width="1.300"/><path d="M3 3.500h4M3 5.500h5" stroke="#3c5fae" stroke-width=".9"/><path d="M3.500 10.800h5" stroke="#3c5fae" stroke-width="1.400"/></svg>
<div class="t" style="left:582.60px;top:535.3px;font-size:13px;color:#1e1e1e;letter-spacing:-0.243px;">Console</div>
<svg class="ic" style="left:634.5px;top:538.6px" width="10" height="10" viewBox="0 0 10 10"><path d="M1.500 1.500h2.200L5 3.200 6.300 1.500h2.200v1.800L7 5l1.500 1.700v1.800H6.300L5 6.800 3.700 8.500H1.500V6.700L3 5 1.500 3.300z" fill="#fff" stroke="#2e2e2e" stroke-width="1.250"/></svg>
<svg class="ic" style="left:654px;top:537px" width="12" height="12" viewBox="0 0 12 12"><rect x="0.500" y="0.500" width="11" height="10" fill="#f4f6fa" stroke="#c0c8d8"/><path d="M0.500 3h11M4 3v7.500" stroke="#c0c8d8"/></svg>
<div class="t" style="left:669.00px;top:535.3px;font-size:13px;color:#9c9c9c;letter-spacing:0.115px;">Properties</div>
<svg class="ic" style="left:737px;top:538px" width="14" height="10" viewBox="0 0 14 10"><path d="M1.500 0v10M5 0v10M8.500 0v10M12 0v10" stroke="#b0b8c8" stroke-width="1"/><rect x="0.500" y="2" width="2" height="2" fill="#8a96b0"/><rect x="4" y="5" width="2" height="2" fill="#8a96b0"/><rect x="7.500" y="2" width="2" height="2" fill="#8a96b0"/><rect x="11" y="5" width="2" height="2" fill="#8a96b0"/></svg>
<div class="t" style="left:753.20px;top:535.3px;font-size:13px;color:#9c9c9c;letter-spacing:-0.374px;">Call Graph</div>
<svg class="ic" style="left:1261px;top:536.700px" width="13" height="14" viewBox="0 0 13 14"><path d="M4.500 1h4v6h3L6.500 13 1.500 7h3z" fill="#fbd873" stroke="#d29a1a"/></svg>
<svg class="ic" style="left:1284.500px;top:536.700px" width="13" height="14" viewBox="0 0 13 14"><path d="M4.500 13h4V7h3L6.500 1 1.500 7h3z" fill="#fde9a8" stroke="#d29a1a"/></svg>
<div class="abs" style="left:1303.500px;top:533px;width:21.500px;height:22.500px;border:1px solid #b5b1a9;border-radius:3px;background:#ebe9e5"></div>
<svg class="ic" style="left:1307px;top:536.700px" width="15" height="15" viewBox="0 0 15 15"><path d="M12 4H5V1.500L1 5l4 3.500V6h7z" fill="#f8d77a" stroke="#c08a1a" stroke-width=".9"/><path d="M3 11h7V8.500L14 12l-4 3V13H3z" fill="#f8d77a" stroke="#c08a1a" stroke-width=".9"/></svg>
<div class="abs" style="left:1332px;top:537px;width:1px;height:14px;background:#d2d2d2"></div>
<svg class="ic" style="left:1341px;top:537px" width="14" height="13" viewBox="0 0 14 13"><rect x="0.500" y="0.500" width="9" height="10" fill="#e8eef8" stroke="#a8b8d4"/><rect x="10.500" y="0.500" width="3" height="12" fill="#d0dcf0" stroke="#8098c8"/><path d="M2 11.500v-3M4 11.500v-4M6 11.500v-2" stroke="#6080c0"/></svg>
<svg class="ic" style="left:1364px;top:537px" width="14" height="13" viewBox="0 0 14 13"><rect x="0.500" y="0.500" width="9" height="10" fill="#e8eef8" stroke="#a8b8d4"/><rect x="10.500" y="0.500" width="3" height="12" fill="#d0dcf0" stroke="#8098c8"/><rect x="2" y="7" width="6" height="5" fill="#e8b84a" stroke="#b0801a"/><path d="M3.500 7V5.500a1.500 1.500 0 0 1 3 0V7" fill="none" stroke="#b0801a"/></svg>
<svg class="ic" style="left:1389px;top:538px" width="11" height="8" viewBox="0 0 11 8"><path d="M1 1.500h8M1 4.500h8M1 7.500h5" stroke="#c4cee4" stroke-width="1"/></svg>
<svg class="ic" style="left:1411px;top:536px" width="14" height="14" viewBox="0 0 14 14"><path d="M1.500 0.500h6l2 2v9h-8z" fill="#f4f4ec" stroke="#b0a888"/><path d="M3 4h4M3 6h5M3 8h5" stroke="#7a90c0"/><path d="M8 8l5 5M13 8l-5 5" stroke="#777" stroke-width="1.800"/></svg>
<div class="abs" style="left:1434px;top:537px;width:1px;height:14px;background:#d2d2d2"></div>
<svg class="ic" style="left:1444px;top:536px" width="14" height="14" viewBox="0 0 14 14"><rect x="0.500" y="5.500" width="11" height="8" fill="#f4f8ff" stroke="#7090c8"/><rect x="0.500" y="5.500" width="11" height="2.500" fill="#3d6fc0"/><path d="M7 7l3-4" stroke="#2a8a3a" stroke-width="1.500"/><circle cx="11" cy="2.500" r="2.200" fill="#3ab04a"/></svg>
<svg class="ic" style="left:1467px;top:536px" width="13" height="13" viewBox="0 0 13 13"><rect x="1" y="1" width="11" height="8.500" rx="1" fill="#dce8fa" stroke="#2b4f9a" stroke-width="1.600"/><path d="M3.500 4h4M3.500 6h5.500" stroke="#2b4f9a" stroke-width=".9"/><path d="M3.500 11.800h6" stroke="#2b4f9a" stroke-width="1.600"/></svg>
<svg class="ic" style="left:1490px;top:541px" width="7" height="5" viewBox="0 0 7 5"><path d="M0 0.500h7L3.500 4.500z" fill="#777"/></svg>
<svg class="ic" style="left:1507px;top:536px" width="14" height="14" viewBox="0 0 14 14"><rect x="0.500" y="3.500" width="11" height="10" fill="#fdfdf4" stroke="#a8a070"/><rect x="0.500" y="3.500" width="11" height="2.500" fill="#3d6fc0"/><path d="M11 0.500l1 2 2 .4-1.600 1.300.5 2L11 5l-1.900 1.200.5-2L8 2.900l2-.4z" fill="#f8d060" stroke="#c89a20" stroke-width=".5"/></svg>
<svg class="ic" style="left:1530px;top:541px" width="7" height="5" viewBox="0 0 7 5"><path d="M0 0.500h7L3.500 4.500z" fill="#777"/></svg>
<svg class="ic" style="left:1551px;top:540px" width="9" height="4" viewBox="0 0 9 4"><rect x="0.600" y="0.600" width="7.800" height="2.400" fill="#fff" stroke="#2a2a2a" stroke-width="1.100"/></svg>
<svg class="ic" style="left:1574.8px;top:540px" width="9" height="8" viewBox="0 0 9 8"><rect x="0.600" y="0.600" width="7.400" height="6.800" fill="#fff" stroke="#2a2a2a" stroke-width="1.100"/><rect x="0.600" y="0.600" width="7.400" height="1.700" fill="#666"/></svg>
<div class="t" style="left:430.80px;top:556.5px;font-size:13px;color:#4a4a4a;letter-spacing:-0.100px;">CDT Build Console [helloworld]</div>
<div class="abs" style="left:430px;top:573px;width:1166px;height:1px;background:#ececec"></div>
<div class="abs" style="left:430px;top:574px;width:1153px;height:170px;overflow:hidden">
<div class="m" style="left:2px;top:-6.5px">make all</div>
<div class="m" style="left:2px;top:6.0px">make  all-recursive</div>
<div class="m" style="left:2px;top:18.5px">make[1]: Entering directory '/home/dvdk/workspace/helloworld'</div>
<div class="m" style="left:2px;top:31.0px">Making all in src</div>
<div class="m" style="left:2px;top:43.5px">make[2]: Entering directory '/home/dvdk/workspace/helloworld/src'</div>
<div class="m" style="left:2px;top:56.0px">make[2]: Nothing to be done for 'all'.</div>
<div class="m" style="left:2px;top:68.5px">make[2]: Leaving directory '/home/dvdk/workspace/helloworld/src'</div>
<div class="m" style="left:2px;top:81.0px">make[2]: Entering directory '/home/dvdk/workspace/helloworld'</div>
<div class="m" style="left:2px;top:93.5px">make[2]: Leaving directory '/home/dvdk/workspace/helloworld'</div>
<div class="m" style="left:2px;top:106.0px">make[1]: Leaving directory '/home/dvdk/workspace/helloworld'</div>
<div class="m" style="left:2px;top:131.0px"><span style="color:#2a2aff">09:13:00 Build Finished (took 655ms)</span></div>
</div>
<div class="abs" style="left:1583px;top:574px;width:12.500px;height:169px;background:#f9f9f9;border-left:1px solid #eeeeee;border-top:1px solid #e8e8e8"></div>
<div class="abs" style="left:1586px;top:594px;width:6.500px;height:145px;border-radius:4px;background:#b2b2b2"></div>
<div class="abs" style="left:430px;top:743px;width:1153px;height:12px;background:#f9f9f9;border-top:1px solid #eeeeee;border-left:1px solid #e8e8e8"></div>
<div class="abs" style="left:433px;top:745.500px;width:1147px;height:6.500px;border-radius:4px;background:#b2b2b2"></div>
<div class="abs" style="left:1583px;top:743px;width:12.500px;height:12px;background:#f5f5f5"></div>
<div class="abs" style="left:1333px;top:764px;width:0;height:18px;border-left:1.300px dotted #8f8a80"></div>
<div class="t" style="left:1336.80px;top:765px;font-size:13px;color:#555;letter-spacing:-0.058px;">Launching helloworld...eabi: (57%)</div>
<div class="abs" style="left:1550px;top:768.500px;width:19px;height:9.500px;border-radius:3px;background:#e9e7e4;box-shadow:inset 0 0 1px rgba(0,0,0,.25)"></div>
<div class="abs" style="left:1551.500px;top:770px;width:2.500px;height:6.500px;border-radius:1px;background:#6a9ad8"></div>
<svg class="ic" style="left:1577px;top:767px" width="14" height="12" viewBox="0 0 14 12"><rect x="0.500" y="0.500" width="8" height="6" fill="#e8f4e8" stroke="#7ab88a"/><rect x="2.500" y="2.500" width="8" height="6" fill="#e8f4e8" stroke="#7ab88a"/><rect x="4.500" y="4.500" width="9" height="7" fill="#f0f8f0" stroke="#4a9a5a"/><rect x="5.500" y="7" width="4.500" height="2.500" fill="#3aa04a"/></svg>
<div class="abs" style="left:0;top:785.500px;width:1600px;height:20.500px;background:linear-gradient(#ededed,#dadada 45%,#c4c4c4);border-bottom:1.500px solid #6e6e6e"></div>
<div class="abs" style="left:0;top:786.500px;width:38.800px;height:19.500px;background:linear-gradient(#7db5e3,#3f86c6 45%,#2a68a4)"></div>
<svg class="ic" style="left:9.500px;top:786.800px" width="19" height="19" viewBox="0 0 19 19"><circle cx="9.500" cy="9.500" r="8.600" fill="#9fc4e6"/><path d="M1.500 12c3-.5 6.500-3 8.500-7.500 1.500 2.500 3.500 5.500 7.500 8-3-.6-6-2.600-7.500-5C8.500 10.500 5 12.600 1.500 12z" fill="#2b6cab"/><path d="M2.500 14.500c2.500-.3 5-1.600 6.500-3.500" stroke="#2b6cab" stroke-width=".8" fill="none"/><circle cx="9.500" cy="9.500" r="8.600" fill="none" stroke="#d6e6f5" stroke-width=".8"/></svg>
<svg class="ic" style="left:48px;top:787px" width="18" height="18" viewBox="0 0 18 18"><path d="M1 3.500h6l1.500 1.500h8.500v12h-16z" fill="#dfe6ee" stroke="#7c8896"/><rect x="2" y="6.500" width="12" height="10" fill="#5b94cf" stroke="#3468a4"/><path d="M11 9l0 7 1.800-1.600 1.200 2.400 1.200-.6-1.200-2.300 2.300-.2z" fill="#fff" stroke="#333" stroke-width=".7"/></svg>
<svg class="ic" style="left:69px;top:787px" width="19" height="18" viewBox="0 0 19 18"><rect x="0.500" y="0.500" width="18" height="17" rx="2" fill="#1d4f80" stroke="#12324f"/><path d="M2 7c2-3 4-2 5-1s3 1 4-1 4-2 6 0v6c-2 1-3 0-5 1s-3 2-5 1-3-2-5-1z" fill="#9cc8ec"/><path d="M0.500 5.500h18M0.500 12.500h18M6.500 0.500v17M12.500 0.500v17" stroke="#6aa4d4" stroke-width=".6"/></svg>
<svg class="ic" style="left:92px;top:787px" width="19" height="18" viewBox="0 0 19 18"><rect x="0.500" y="0.500" width="18" height="17" rx="2" fill="#f2f2f2" stroke="#8a8a8a"/><rect x="1" y="1" width="17" height="4" fill="#6a9ad4"/><path d="M12 3h1M14 3h1M16 3h1" stroke="#fff"/></svg>
<div class="abs" style="left:117px;top:788.500px;width:32px;height:14.500px;background:#82b0dc;border:1px solid #9fc4e8"></div>
<div class="abs" style="left:151px;top:788.500px;width:31px;height:14.500px;background:#b6b3ad"></div>
<svg class="ic" style="left:127px;top:790px" width="13" height="12" viewBox="0 0 13 12"><ellipse cx="6.500" cy="6" rx="5.600" ry="5" fill="#3a2a78"/><path d="M1.500 3.500A5.600 5 0 0 0 2 9" stroke="#f7941e" stroke-width="1.300" fill="none"/><rect x="3.500" y="3.500" width="6.500" height="5" rx="1" fill="#fff"/></svg>
<svg class="ic" style="left:191.5px;top:788px" width="15" height="15" viewBox="0 0 16 16"><rect x="0.500" y="1.500" width="15" height="13" rx="1.500" fill="#3f6f1f" stroke="#27480f"/><path d="M1 2h14v5L1 10z" fill="#5a9030" opacity=".7"/><path d="M3 4.500l1.500 1L3 6.500" stroke="#e8ffd8" stroke-width=".9" fill="none"/></svg>
<div class="t" style="left:208.70px;top:788px;font-size:13.5px;color:#1e1e1e;letter-spacing:-0.128px;">[dvdk@vagran...</div>
<svg class="ic" style="left:317.5px;top:788px" width="15" height="15" viewBox="0 0 16 16"><rect x="0.500" y="1.500" width="15" height="13" rx="1.500" fill="#3f6f1f" stroke="#27480f"/><path d="M1 2h14v5L1 10z" fill="#5a9030" opacity=".7"/><path d="M3 4.500l1.500 1L3 6.500" stroke="#e8ffd8" stroke-width=".9" fill="none"/></svg>
<div class="t" style="left:334.70px;top:788px;font-size:13.5px;color:#1e1e1e;letter-spacing:-0.128px;">[dvdk@vagran...</div>
<svg class="ic" style="left:443.0px;top:788px" width="15" height="15" viewBox="0 0 16 16"><rect x="0.500" y="1.500" width="15" height="13" rx="1.500" fill="#3f6f1f" stroke="#27480f"/><path d="M1 2h14v5L1 10z" fill="#5a9030" opacity=".7"/><path d="M3 4.500l1.500 1L3 6.500" stroke="#e8ffd8" stroke-width=".9" fill="none"/></svg>
<div class="t" style="left:460.20px;top:788px;font-size:13.5px;color:#1e1e1e;letter-spacing:-0.128px;">[dvdk@vagran...</div>
<svg class="ic" style="left:569.0px;top:788px" width="15" height="15" viewBox="0 0 16 16"><rect x="0.500" y="1.500" width="15" height="13" rx="1.500" fill="#3f6f1f" stroke="#27480f"/><path d="M1 2h14v5L1 10z" fill="#5a9030" opacity=".7"/><path d="M3 4.500l1.500 1L3 6.500" stroke="#e8ffd8" stroke-width=".9" fill="none"/></svg>
<div class="t" style="left:586.20px;top:788px;font-size:13.5px;color:#1e1e1e;letter-spacing:-0.128px;">[dvdk@vagran...</div>
<svg class="ic" style="left:695px;top:788.5px;" width="16" height="15" viewBox="0 0 16 16"><circle cx="8" cy="8" r="7" fill="#2c2255"/><path d="M2.2 4.5A7 7 0 0 0 2.2 11.5" stroke="#f7941e" stroke-width="1.6" fill="none"/><rect x="2.2" y="5.6" width="12.4" height="1.1" fill="#fff"/><rect x="1.6" y="7.6" width="13.2" height="1.1" fill="#fff"/><rect x="2.2" y="9.6" width="12.4" height="1.1" fill="#fff"/></svg>
<div class="t" style="left:711.80px;top:788px;font-size:13.5px;color:#1e1e1e;letter-spacing:-0.453px;">C/C++ - hellowo...</div>
<div class="abs" style="left:818.500px;top:786px;width:121.500px;height:20px;background:linear-gradient(#8e8e8e,#a4a4a4 45%,#b6b6b6);border-radius:2px;box-shadow:inset 0 1px 2px rgba(0,0,0,.3)"></div>
<svg class="ic" style="left:821.5px;top:788.5px;" width="16" height="15" viewBox="0 0 16 16"><circle cx="8" cy="8" r="7" fill="#2c2255"/><path d="M2.2 4.5A7 7 0 0 0 2.2 11.5" stroke="#f7941e" stroke-width="1.6" fill="none"/><rect x="2.2" y="5.6" width="12.4" height="1.1" fill="#fff"/><rect x="1.6" y="7.6" width="13.2" height="1.1" fill="#fff"/><rect x="2.2" y="9.6" width="12.4" height="1.1" fill="#fff"/></svg>
<div class="t" style="left:838.60px;top:788.3px;font-size:13.5px;color:#f0f0f0;letter-spacing:-0.385px;">Enter Password</div>
<svg class="ic" style="left:1526px;top:786px" width="18" height="19" viewBox="0 0 18 19"><rect x="8" y="1.500" width="8.500" height="7" rx="1" fill="#e8e8e8" stroke="#4a4a4a" stroke-width="1.500"/><rect x="1.500" y="11" width="8.500" height="6.500" rx="1" fill="#e8e8e8" stroke="#4a4a4a" stroke-width="1.500"/><path d="M12 9v3.500h-2" stroke="#4a4a4a" stroke-width="1.500" fill="none"/></svg>
<div class="t b" style="left:1546.50px;top:788px;font-size:11.8px;color:#2e2e2e;letter-spacing:-0.038px;">09:14</div>
<svg class="ic" style="left:1582px;top:788px" width="15" height="16" viewBox="0 0 15 16"><path d="M4.500 4A5.600 5.600 0 1 0 10.500 4" fill="none" stroke="#4a4a4a" stroke-width="1.500"/><path d="M7.500 1v7" stroke="#4a4a4a" stroke-width="1.500"/></svg>
<div class="abs" style="left:660px;top:224px;width:280.500px;height:254.500px;background:#f1f0ef;border:1px solid #8a8a8a;border-top-color:#6c6c6c;border-left-color:#7c7c7c"></div>
<div class="abs" style="left:661px;top:225px;width:278.500px;height:20.500px;background:linear-gradient(#fcfcfc,#ececec 65%,#dfdfdf)"></div>
<div class="abs" style="left:661px;top:476px;width:278.500px;height:1px;background:#8a8a8a"></div>
<svg class="ic" style="left:667px;top:228px;" width="14" height="14" viewBox="0 0 16 16"><circle cx="8" cy="8" r="7" fill="#2c2255"/><path d="M2.2 4.5A7 7 0 0 0 2.2 11.5" stroke="#f7941e" stroke-width="1.6" fill="none"/><rect x="2.2" y="5.6" width="12.4" height="1.1" fill="#fff"/><rect x="1.6" y="7.6" width="13.2" height="1.1" fill="#fff"/><rect x="2.2" y="9.6" width="12.4" height="1.1" fill="#fff"/></svg>
<div class="t b" style="left:726.20px;top:225.3px;font-size:12.3px;color:#4c4c4c;letter-spacing:0.063px;font-family:'DejaVu Sans','Liberation Sans',sans-serif;">Enter Password</div>
<svg class="ic" style="left:887.4px;top:229px" width="46" height="10" viewBox="0 0 46 10"><path d="M0 5h8M19 5h8M23 1v8" stroke="#7a7a7a" stroke-width="1.500" fill="none"/><path d="M37.300 1.500l7 7M44.300 1.500l-7 7" stroke="#7a7a7a" stroke-width="1.600" fill="none"/></svg>
<div class="t" style="left:671.60px;top:255.3px;font-size:12.6px;color:#4a4a4a;letter-spacing:-0.033px;">System type:</div>
<div class="t" style="left:794.10px;top:255.3px;font-size:12.6px;color:#4a4a4a;letter-spacing:-0.362px;">SSH Only</div>
<div class="t" style="left:671.60px;top:273.3px;font-size:12.6px;color:#4a4a4a;letter-spacing:0.109px;">Host name:</div>
<div class="t" style="left:794.10px;top:273.3px;font-size:12.6px;color:#4a4a4a;letter-spacing:-0.196px;">192.168.0.89</div>
<div class="t" style="left:671.60px;top:291.8px;font-size:12.6px;color:#4a4a4a;letter-spacing:0.074px;">Connection name:</div>
<div class="t" style="left:794.10px;top:291.8px;font-size:12.6px;color:#4a4a4a;letter-spacing:-0.640px;">DESK-MX6-EVK</div>
<div class="t" style="left:671.60px;top:314.3px;font-size:12.6px;color:#4a4a4a;letter-spacing:-0.198px;">User ID:</div>
<div class="t" style="left:671.60px;top:340.8px;font-size:12.6px;color:#4a4a4a;letter-spacing:0.210px;">Password (optional):</div>
<div class="abs" style="left:794px;top:311.500px;width:134px;height:22.500px;border:1px dotted #8a8a8a"></div>
<div class="abs" style="left:795.500px;top:313px;width:131px;height:19.500px;background:#fff;border:1.200px solid #86acd8;border-radius:3px;box-shadow:inset 0 0 1.500px rgba(120,160,210,.6)"></div>
<div class="t" style="left:798.50px;top:314.3px;font-size:13px;color:#2a2a2a;letter-spacing:0.698px;">root</div>
<div class="abs" style="left:823.500px;top:316px;width:1px;height:14px;background:#222"></div>
<div class="abs" style="left:795.500px;top:339px;width:132.500px;height:20.800px;background:#fff;border:1px solid #bdb9b3;border-radius:3px"></div>
<div class="abs" style="left:796.500px;top:369px;width:12.500px;height:12.500px;background:linear-gradient(#a9c6e6,#7fa8d6);border:1px solid #6a93c4;border-radius:2.500px"></div>
<svg class="ic" style="left:797.500px;top:367.500px;overflow:visible" width="13" height="13" viewBox="0 0 13 13"><path d="M2 7.300l2.700 3.200L10.800 2.200" stroke="#2c5a94" stroke-width="1.800" fill="none"/></svg>
<div class="t" style="left:814.10px;top:366.3px;font-size:12.6px;color:#4a4a4a;letter-spacing:-0.266px;">Save user ID</div>
<div class="abs" style="left:796.500px;top:393px;width:12.500px;height:12.500px;background:#fff;border:1px solid #b4b0a9;border-radius:2px"></div>
<div class="t" style="left:814.10px;top:390.3px;font-size:12.6px;color:#4a4a4a;letter-spacing:-0.039px;">Save password</div>
<div class="abs" style="left:754px;top:450.500px;width:86.500px;height:22px;border:1px solid #c4c0b8;border-radius:3px;background:linear-gradient(#fdfdfd,#f1f0ee)"></div>
<div class="t" style="left:754px;width:86.500px;text-align:center;top:452.800px;color:#4a4a4a;font-size:12.600px">Cancel</div>
<div class="abs" style="left:849px;top:450.500px;width:87px;height:22px;border:1px solid #8fb0d4;border-radius:3px;background:linear-gradient(#c7dbee,#a9c6e3)"></div>
<div class="t" style="left:849px;width:87px;text-align:center;top:452.800px;color:#4a4a4a;font-size:12.600px">OK</div>
</body></html>
